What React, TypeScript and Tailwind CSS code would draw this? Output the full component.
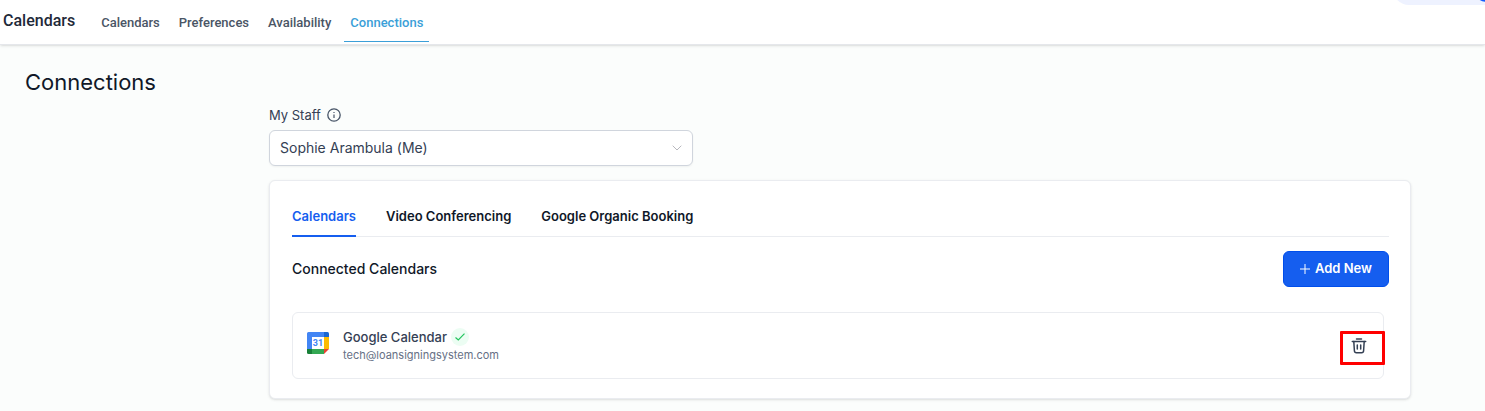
import clsx from "clsx";

const navItems = ["Calendars", "Preferences", "Availability", "Connections"];
const tabs = ["Calendars", "Video Conferencing", "Google Organic Booking"];

function InfoIcon() {
  return (
    <svg viewBox="0 0 14 14" className="size-3.5" fill="none" stroke="#475467">
      <circle cx="7" cy="7" r="6.2" strokeWidth="1.3" />
      <path d="M7 6.4v3.6M7 3.9v1.2" strokeWidth="1.2" />
    </svg>
  );
}

function GoogleCalendarIcon() {
  return (
    <svg viewBox="0 0 22 22" className="mb-1.5 size-[22px] shrink-0">
      <path d="M1.5 0H17v5H5v12H0V1.5A1.5 1.5 0 0 1 1.5 0z" fill="#4285f4" />
      <path d="M17 0h3.500A1.500 1.500 0 0 1 22 1.500V5h-5z" fill="#1967d2" />
      <path d="M17 5h5v12h-5z" fill="#fbbc04" />
      <path d="M5 17h12v5H5z" fill="#34a853" />
      <path d="M0 17h5v5H1.500A1.500 1.500 0 0 1 0 20.500z" fill="#188038" />
      <path d="M17 17h5l-5 5z" fill="#ea4335" />
      <path d="M5 5h12v12H5z" fill="#fff" />
      <text
        x="11"
        y="14"
        textAnchor="middle"
        fontSize="9"
        fontWeight="700"
        fontFamily="Roboto, sans-serif"
        fill="#4285f4"
      >
        31
      </text>
    </svg>
  );
}

function TrashIcon() {
  return (
    <svg
      viewBox="0 0 16 16"
      className="size-4"
      fill="none"
      stroke="#344054"
      strokeWidth="1.5"
      strokeLinecap="round"
      strokeLinejoin="round"
    >
      <path d="M5.500 1h5M1.300 3.500h13.400" />
      <path d="M2.800 3.500l.6 9.300c.1 1.400.8 2 2 2h5.200c1.200 0 1.900-.6 2-2l.6-9.300" />
      <path d="M6.300 7v4M9.700 7v4" />
    </svg>
  );
}

function TopNav() {
  return (
    <header className="relative flex h-[45px] items-start overflow-hidden border-b border-gray-200 bg-white pl-[3px] font-[Roboto,sans-serif] shadow-sm">
      <span className="pt-[9px] text-base leading-6 font-medium text-gray-800">Calendars</span>
      <nav className="flex gap-[7px] pl-5">
        {navItems.map((item) => (
          <a
            key={item}
            href="#"
            className={clsx(
              "h-[42px] border-b px-1.5 pt-[13px] text-[13px] leading-5 font-medium",
              item === "Connections"
                ? "border-[#3b9fd8] text-[#3b9fd8]"
                : "border-transparent text-gray-600",
            )}
          >
            {item}
          </a>
        ))}
      </nav>
      <div className="absolute -top-[35px] -right-4 h-10 w-27 rounded-2xl bg-indigo-50">
        <span className="absolute right-0 bottom-[3px] size-7 rounded-full bg-blue-600" />
      </div>
    </header>
  );
}

function StaffSelect() {
  return (
    <div>
      <div className="flex items-center gap-1.5">
        <label htmlFor="staff" className="text-[13px] leading-5 text-[#344054]">
          My Staff
        </label>
        <InfoIcon />
      </div>
      <div className="relative mt-[5px] max-w-[424px]">
        <select
          id="staff"
          className="block h-9 w-full appearance-none rounded-md border border-[#d0d5dd] bg-white px-2.5 pb-0.5 text-[14px] text-[#344054] shadow-xs"
        >
          <option>Sophie Arambula (Me)</option>
        </select>
        <svg
          viewBox="0 0 10 6"
          className="pointer-events-none absolute top-[15px] right-[11px] h-1.5 w-2.5"
          fill="none"
          stroke="#b8b8be"
        >
          <path d="M.7.700 5 5 9.300.700" />
        </svg>
      </div>
    </div>
  );
}

function CalendarRow() {
  return (
    <div className="mt-[25px] mr-[5px] flex h-[67px] items-center rounded-md border border-[#eaecf0] pr-4 pl-3.5">
      <GoogleCalendarIcon />
      <div className="ml-3.5 min-w-0 flex-1 pb-0.5">
        <div className="flex items-center gap-1">
          <span className="text-[13px] leading-5 font-medium text-[#344054]">
            Google Calendar
          </span>
          <span className="flex size-[18px] items-center justify-center rounded-full bg-[#ecfdf3]">
            <svg viewBox="0 0 10 8" className="h-2 w-2.5" fill="none" stroke="#22c55e" strokeWidth="1.2">
              <path d="M.5 4.500 3.300 7 9.500.700" />
            </svg>
          </span>
        </div>
        <p className="text-[11px] leading-4 text-[#667085]">tech@loansigningsystem.com</p>
      </div>
      <button type="button" aria-label="Delete calendar" className="relative">
        <TrashIcon />
        <span className="absolute -top-[7px] -left-[11px] h-[34px] w-[45px] rounded-[1px] border-3 border-[#ff0000]" />
      </button>
    </div>
  );
}

export default function App() {
  return (
    <div className="min-h-screen bg-[#fbfdfc] font-[Inter,sans-serif]">
      <TopNav />
      <main className="pt-[21px] pb-3">
        <h1 className="pl-[25px] text-[22px] leading-8 text-[#101828]">Connections</h1>
        <div className="mt-[7px] pr-[74px] pl-[269px]">
          <StaffSelect />
          <section className="mt-3.5 rounded-md border border-[#eaecf0] bg-white pt-[25px] pr-[21px] pb-[19px] pl-[22px] shadow-sm">
            <div role="tablist" className="flex gap-[30px] shadow-[inset_0_-1px_0_#eaecf0]">
              {tabs.map((tab, i) => (
                <button
                  key={tab}
                  type="button"
                  role="tab"
                  aria-selected={i === 0}
                  className={clsx(
                    "border-b-2 pb-[9px] text-[13px] leading-5 font-semibold",
                    i === 0
                      ? "border-[#155eef] text-[#155eef]"
                      : "border-transparent text-[#101828]",
                  )}
                >
                  {tab}
                </button>
              ))}
            </div>
            <div className="mt-3.5 flex items-center justify-between">
              <h2 className="text-[14px] leading-5 font-medium text-[#101828]">
                Connected Calendars
              </h2>
              <button
                type="button"
                className="flex h-9 items-center gap-[5px] rounded-md border border-[#004eeb] bg-[#155eef] px-4 text-[13px] font-semibold text-white"
              >
                <svg viewBox="0 0 10 10" className="size-2.5" stroke="currentColor">
                  <path d="M5 0v10M0 5h10" />
                </svg>
                Add New
              </button>
            </div>
            <CalendarRow />
          </section>
        </div>
      </main>
    </div>
  );
}
